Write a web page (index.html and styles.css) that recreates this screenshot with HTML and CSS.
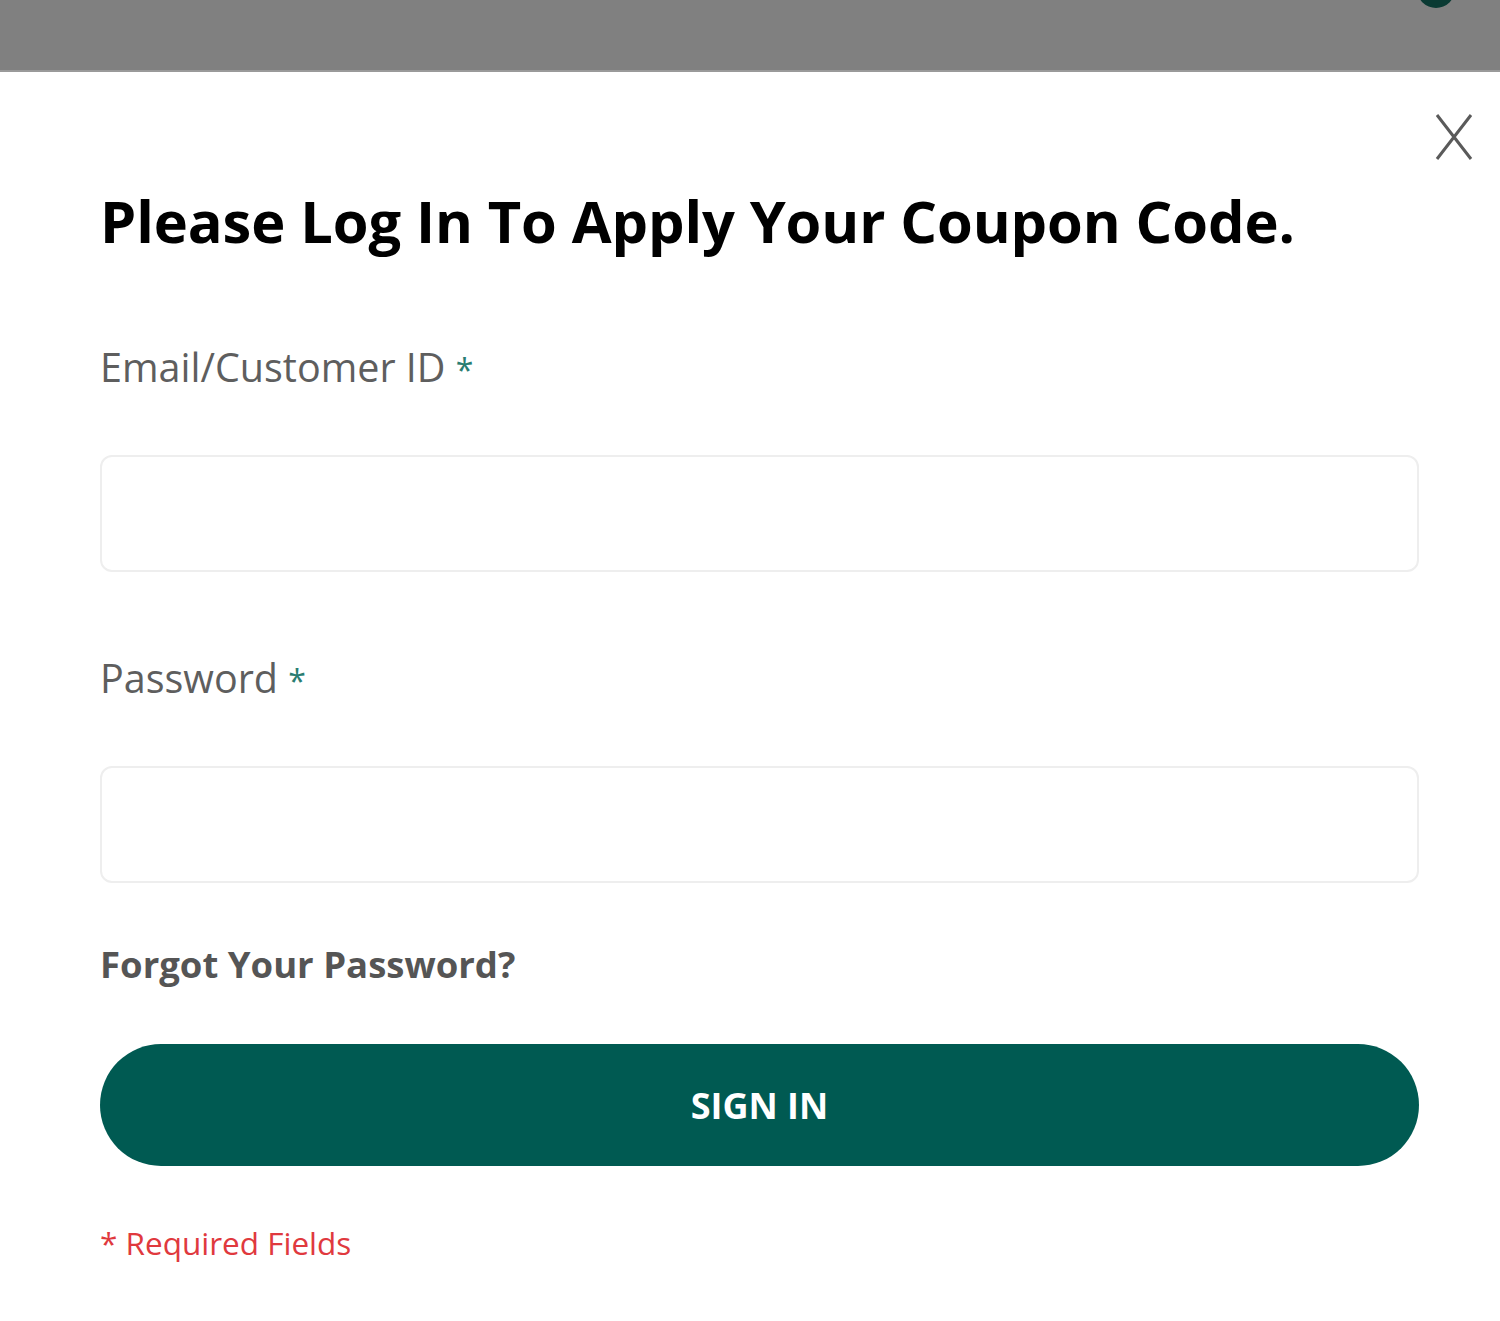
FILE: index.html
```html
<!DOCTYPE html>
<html lang="en">
<head>
<meta charset="utf-8">
<title>Log In</title>
<link rel="stylesheet" href="styles.css">
</head>
<body>
<div class="topbar"><span class="avatar"></span></div>
<div class="modal">
  <button class="close" aria-label="Close">
    <svg width="38" height="48" viewBox="0 0 38 48"><path d="M2 2 L36 46 M36 2 L2 46" stroke="#5a5a5a" stroke-width="3" fill="none"/></svg>
  </button>
  <h1 class="title">Please Log In To Apply Your Coupon Code.</h1>
  <form class="form">
    <label class="label label-email">Email/Customer ID <span class="req">*</span></label>
    <input class="field" type="text">
    <label class="label label-pass">Password <span class="req">*</span></label>
    <input class="field" type="password">
    <a class="forgot" href="#">Forgot Your Password?</a>
    <button class="signin" type="button">SIGN IN</button>
    <p class="required">* Required Fields</p>
  </form>
</div>
</body>
</html>
```

FILE: styles.css
```css
html, body {
  margin: 0;
  padding: 0;
  background: #ffffff;
  font-family: "Open Sans", "Noto Sans", sans-serif;
}

.topbar {
  height: 70px;
  background: #808080;
  border-bottom: 2px solid #9a9a9a;
  position: relative;
  overflow: hidden;
}

.avatar {
  position: absolute;
  left: 1417px;
  top: -30px;
  width: 38px;
  height: 38px;
  border-radius: 50%;
  background: #0a3a33;
}

.modal {
  position: relative;
  padding: 115px 81px 0 100px;
}

.close {
  position: absolute;
  top: 41px;
  left: 1435px;
  padding: 0;
  margin: 0;
  border: 0;
  background: none;
  line-height: 0;
}

.title {
  margin: 0;
  font-size: 57.8px;
  line-height: 68px;
  font-weight: 700;
  color: #000;
  letter-spacing: -0.1px;
}

.form {
  display: flex;
  flex-direction: column;
  margin: 0;
}

.label {
  font-size: 39.5px;
  line-height: 54px;
  color: #5e5e5e;
}

.label-email { margin-top: 85px; }
.label-pass { margin-top: 79px; }

.req {
  color: #2a7d72;
  font-size: 32px;
}

.field {
  margin: 58px 0 0;
  height: 117px;
  box-sizing: border-box;
  border: 2px solid #eeeeee;
  border-radius: 12px;
  background: #fff;
  outline: none;
}

.forgot {
  margin-top: 56px;
  font-size: 36.5px;
  line-height: 50px;
  font-weight: 700;
  color: #555555;
  text-decoration: none;
}

.signin {
  margin-top: 55px;
  height: 122px;
  border: 0;
  border-radius: 61px;
  background: #005a52;
  color: #ffffff;
  font-family: "Open Sans", "Noto Sans", sans-serif;
  font-size: 36px;
  font-weight: 700;
}

.required {
  margin: 56px 0 0;
  font-size: 31.5px;
  line-height: 42px;
  color: #e0393e;
}
```
